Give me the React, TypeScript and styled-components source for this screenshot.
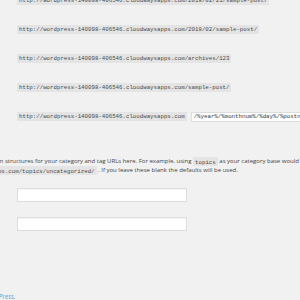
import styled, { createGlobalStyle } from "styled-components";

const GlobalStyle = createGlobalStyle`
    html, body {
        margin: 0;
        padding: 0;
        background: #f1f1f1;
        overflow: hidden;
    }
    body {
        width: 300px;
        height: 300px;
        font-family: "Open Sans", "Noto Sans", sans-serif;
        color: #444;
    }
`

const Page = styled.div`
    display: flex;
    flex-direction: column;
    width: 300px;
    height: 300px;
    overflow: hidden;
`

const Options = styled.div`
    display: flex;
    flex-direction: column;
    margin-top: -14px;
    padding-left: 17px;
`

const OptionRow = styled.div`
    display: flex;
    align-items: center;
    gap: 4px;
    height: 29px;
    white-space: nowrap;
`

const Code = styled.code`
    font-family: "Liberation Mono", monospace;
    font-size: 5.75px;
    line-height: 6.5px;
    padding: 1.5px 2px 1px;
    background: #e4e4e4;
    color: #4a4a4a;
`

const StructureInput = styled.input`
    width: 160px;
    flex-shrink: 0;
    height: 10px;
    box-sizing: border-box;
    padding: 0 2px;
    border: 1px solid #ddd;
    background: #fff;
    font-family: "Liberation Mono", monospace;
    font-size: 5.75px;
    color: #32373c;
    outline: none;
`

const Description = styled.div`
    margin-top: 26px;
    font-size: 6px;
    line-height: 9px;
    color: #444;
`

const Line = styled.div<{ $shift: number }>`
    white-space: nowrap;
    margin-left: ${p => p.$shift}px;
`

const BaseFields = styled.div`
    display: flex;
    flex-direction: column;
    gap: 15px;
    margin-top: 13px;
    padding-left: 17px;
`

const BaseInput = styled.input`
    width: 170px;
    height: 14px;
    box-sizing: border-box;
    border: 1px solid #ddd;
    background: #fff;
    box-shadow: inset 0 1px 1px rgba(0, 0, 0, 0.04);
    outline: none;
`

const Footer = styled.p`
    margin: 61px 0 0;
    white-space: nowrap;
    font-size: 6.5px;
    font-style: italic;
    color: #555;
    a {
        color: #5a9ccf;
        text-decoration: none;
    }
`

const site = "http://wordpress-140098-406546.cloudwaysapps.com"

const samples = [
    `${site}/2018/02/21/sample-post/`,
    `${site}/2018/02/sample-post/`,
    `${site}/archives/123`,
    `${site}/sample-post/`,
]

export default function App() {
    return (
        <Page>
            <GlobalStyle />
            <Options>
                {samples.map(s => (
                    <OptionRow key={s}>
                        <Code>{s}</Code>
                    </OptionRow>
                ))}
                <OptionRow>
                    <Code>{site}</Code>
                    <StructureInput readOnly value="/%year%/%monthnum%/%day%/%postname%/" />
                </OptionRow>
            </Options>
            <Description>
                <Line $shift={-89}>
                    If you like, you may enter custom structures for your category and tag URLs here. For example, using <Code>topics</Code> as your category base would make your category links like
                </Line>
                <Line $shift={-149}>
                    <Code>{site}/topics/uncategorized/</Code> . If you leave these blank the defaults will be used.
                </Line>
            </Description>
            <BaseFields>
                <BaseInput aria-label="Category base" />
                <BaseInput aria-label="Tag base" />
            </BaseFields>
            <Footer>
                <Line $shift={-97}>
                    Thank you for creating with <a href="#">WordPress</a>.
                </Line>
            </Footer>
        </Page>
    )
}
